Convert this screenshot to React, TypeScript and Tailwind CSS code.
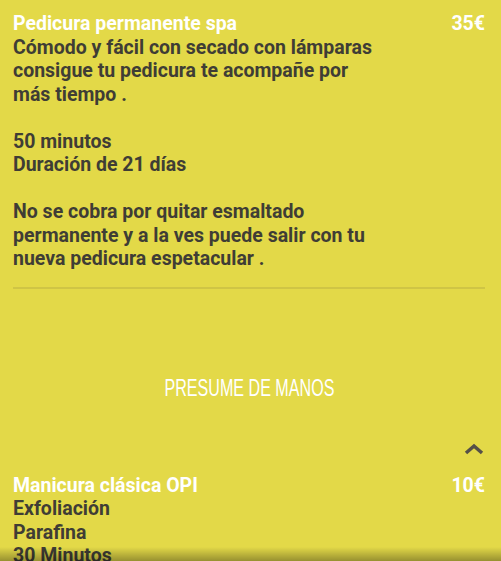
import React from "react";

const BODY = "text-[#3f3d35] font-bold";

function ServiceRow({
  title,
  price,
  lines,
}: {
  title: string;
  price: string;
  lines: string[];
}) {
  return (
    <div>
      <div className="flex justify-between text-white font-bold">
        <span>{title}</span>
        <span>{price}</span>
      </div>
      <div className={BODY}>
        {lines.map((l, i) => (
          <div key={i} className="min-h-[23.5px]">
            {l}
          </div>
        ))}
      </div>
    </div>
  );
}

export default function App() {
  return (
    <div className="relative w-[501px] h-[561px] overflow-hidden bg-[#e3d948]">
      <div
        className="pl-[13px] pr-[16px] pt-[12px] text-[19.5px] leading-[23.5px]"
        style={{ fontFamily: "Roboto, 'Liberation Sans', sans-serif" }}
      >
        <ServiceRow
          title="Pedicura permanente spa"
          price="35€"
          lines={[
            "Cómodo y fácil con secado con lámparas",
            "consigue tu pedicura te acompañe por",
            "más tiempo .",
            "",
            "50 minutos",
            "Duración de 21 días",
            "",
            "No se cobra por quitar esmaltado",
            "permanente y a la ves puede salir con tu",
            "nueva pedicura espetacular .",
          ]}
        />

        <div className="mt-[16px] border-t-2 border-[#cfc545]" />

        <div className="h-[84px]" />
        <div className="text-center">
          <h2
            className="inline-block text-white text-[23px] leading-[30px] scale-x-[0.7]"
            style={{ fontFamily: "'Liberation Sans', sans-serif" }}
          >
            PRESUME DE MANOS
          </h2>
        </div>

        <div className="flex justify-end mt-[40px] mb-[19px] pr-[1px]">
          <svg width="20" height="12" viewBox="0 0 20 12">
            <path d="M2 10 L10 3 L18 10" fill="none" stroke="#555048" strokeWidth="3.5" />
          </svg>
        </div>

        <ServiceRow
          title="Manicura clásica OPI"
          price="10€"
          lines={["Exfoliación", "Parafina", "30 Minutos"]}
        />
      </div>

      <div className="absolute left-0 right-0 bottom-0 h-[14px] bg-gradient-to-b from-[#e3d94800] to-[#00000055]" />
    </div>
  );
}
